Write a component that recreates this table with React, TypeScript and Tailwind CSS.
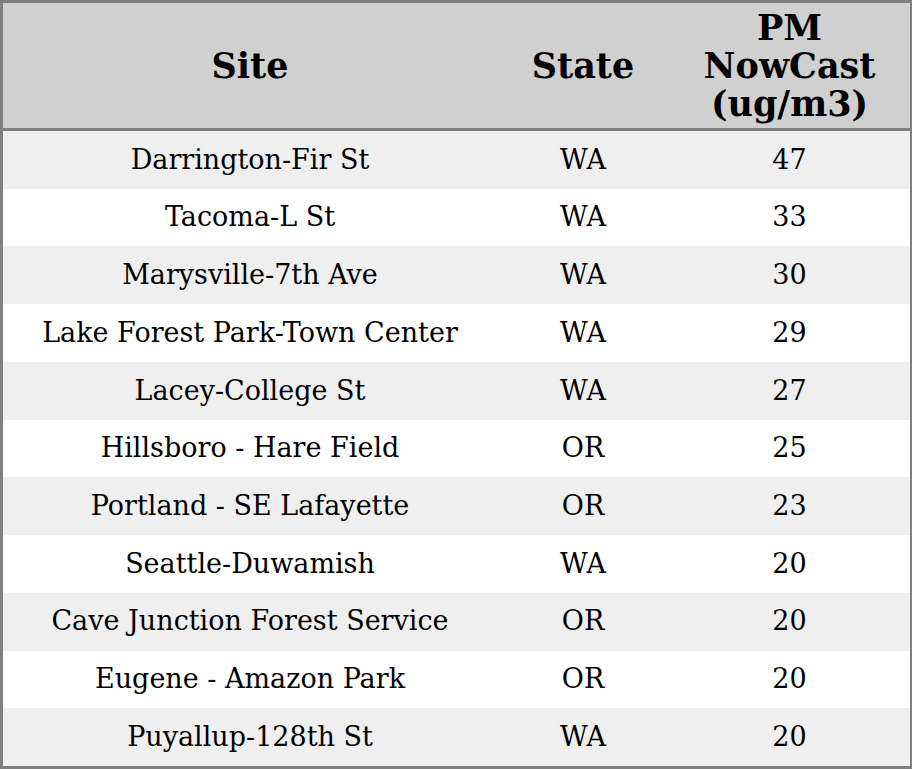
const rows: [string, string, number][] = [
  ['Darrington-Fir St', 'WA', 47],
  ['Tacoma-L St', 'WA', 33],
  ['Marysville-7th Ave', 'WA', 30],
  ['Lake Forest Park-Town Center', 'WA', 29],
  ['Lacey-College St', 'WA', 27],
  ['Hillsboro - Hare Field', 'OR', 25],
  ['Portland - SE Lafayette', 'OR', 23],
  ['Seattle-Duwamish', 'WA', 20],
  ['Cave Junction Forest Service', 'OR', 20],
  ['Eugene - Amazon Park', 'OR', 20],
  ['Puyallup-128th St', 'WA', 20],
];

export default function App() {
  return (
    <div className="w-[912px] h-[769px] bg-white font-['DejaVu_Serif',serif] text-black">
      <div className="flex flex-col h-full border-[3px] border-r-2 border-[#808080]">
        <div className="grid grid-cols-[494px_172px_1fr] h-[128px] shrink-0 bg-[#d0d0d0] border-b-[3px] border-[#808080] text-[35px] font-bold leading-[38px]">
          <div className="flex items-center justify-center">Site</div>
          <div className="flex items-center justify-center">State</div>
          <div className="flex flex-col items-center justify-center text-center">
            <span>PM</span>
            <span>NowCast</span>
            <span>(ug/m3)</span>
          </div>
        </div>
        <div className="flex flex-col flex-1">
          {rows.map(([site, state, value], i) => (
            <div
              key={site}
              className={`grid grid-cols-[494px_172px_1fr] flex-1 items-center text-[27px] ${
                i % 2 === 0 ? 'bg-[#efefef]' : 'bg-white'
              }`}
            >
              <div className="text-center">{site}</div>
              <div className="text-center">{state}</div>
              <div className="text-center">{value}</div>
            </div>
          ))}
        </div>
      </div>
    </div>
  );
}
